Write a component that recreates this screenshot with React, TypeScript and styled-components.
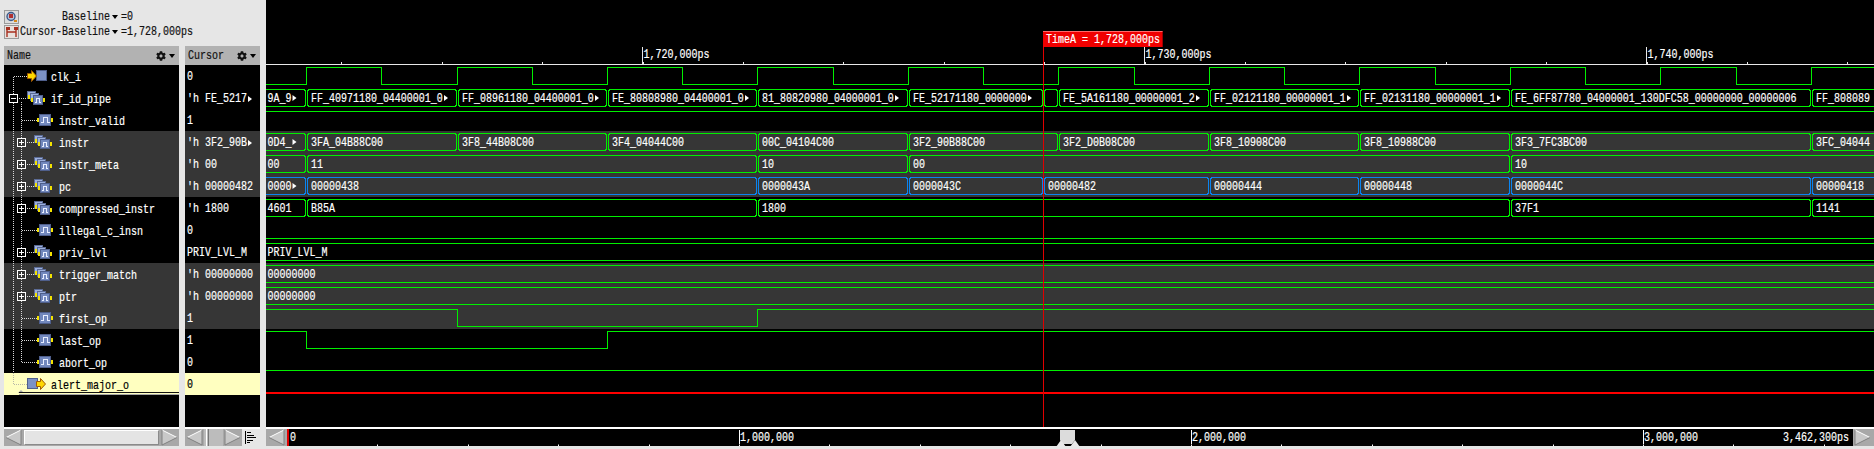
import * as React from 'react';
import styled, { createGlobalStyle } from 'styled-components';
import { FaCog } from 'react-icons/fa';

const GREEN = '#00f000';
const BLUE = '#0a84f0';
const RED = '#ff0000';
const WAVE_LEFT = 266;
const WAVE_WIDTH = 1608;
const CHAR = 6;

const GlobalStyle = createGlobalStyle`
    html, body {
        margin: 0;
        padding: 0;
        background: #e6e6e6;
        overflow: hidden;
    }
`;

const Page = styled.div`
    display: flex;
    width: 1874px;
    height: 449px;
    overflow: hidden;
    font-family: 'Liberation Mono', monospace;
    font-size: 13px;
    color: #fff;
`;

/* the reference font is a tall narrow bitmap: 13px glyphs squeezed to a 6px advance */
const Mono = styled.span<{ $chars: number; $drop?: number }>`
    display: inline-block;
    flex: none;
    width: ${p => p.$chars * CHAR}px;
    margin-top: ${p => p.$drop || 0}px;
    white-space: pre;
    text-align: left;
    transform: scaleX(0.769);
    transform-origin: left center;
    -webkit-text-stroke: 0.2px currentColor;
`;

const Txt = ({ children, drop }: { children: string; drop?: number }) => (
    <Mono $chars={children.length} $drop={drop}>
        {children}
    </Mono>
);

const SidePane = styled.div`
    display: flex;
    flex-direction: column;
    width: ${WAVE_LEFT}px;
    flex: none;
    background: #e6e6e6;
`;

const Readout = styled.div`
    height: 46px;
    padding: 9px 0 0 4px;
    box-sizing: border-box;
    color: #111;
`;

const ReadoutRow = styled.div`
    display: grid;
    grid-template-columns: 16px 90px 11px auto;
    align-items: center;
    height: 15px;
`;

const ReadoutName = styled.span`
    text-align: right;
`;

const Caret = styled.span`
    display: inline-block;
    width: 0;
    height: 0;
    border-left: 3px solid transparent;
    border-right: 3px solid transparent;
    border-top: 4px solid #000;
    margin-left: 2px;
`;

const Columns = styled.div`
    display: flex;
    gap: 6px;
    flex: 1;
    padding: 0 6px 0 4px;
`;

const Column = styled.div<{ $width: number }>`
    display: flex;
    flex-direction: column;
    width: ${p => p.$width}px;
`;

const ColumnHeader = styled.div`
    display: flex;
    align-items: center;
    justify-content: space-between;
    height: 19px;
    padding: 0 4px 0 3px;
    box-sizing: border-box;
    background: #b2b2b2;
    color: #111;
`;

const HeaderTools = styled.span`
    display: flex;
    align-items: center;
    gap: 1px;
`;

const Row = styled.div<{ $tone: Tone }>`
    position: relative;
    display: flex;
    align-items: center;
    height: 22px;
    flex: none;
    white-space: nowrap;
    background: ${p => (p.$tone === 'grey' ? '#363636' : p.$tone === 'note' ? '#ffffc0' : '#000')};
    color: ${p => (p.$tone === 'note' ? '#000' : '#fff')};
`;

const DropLine = styled.div`
    position: absolute;
    left: 15px;
    right: 0;
    bottom: 0;
    height: 1px;
    border-top: 1px solid #111;
    border-bottom: 1px solid #a8a8a8;
`;

const Value = styled.span`
    display: flex;
    align-items: center;
    padding: 1px 0 0 2px;
`;

const MoreMark = styled.span`
    display: inline-block;
    width: 0;
    height: 0;
    border-top: 3px solid transparent;
    border-bottom: 3px solid transparent;
    border-left: 4px solid #fff;
    margin-left: 1px;
`;

const Filler = styled.div`
    flex: 1;
    background: #000;
`;

const ScrollBar = styled.div`
    display: flex;
    align-items: stretch;
    height: 22px;
    flex: none;
    box-sizing: border-box;
    border-top: 2px solid #8f8f8f;
    border-bottom: 3px solid;
    border-image: linear-gradient(#fff 33%, #9a9a9a 33%, #9a9a9a 66%, #e6e6e6 66%) 3;
    border-top-style: solid;
    background: #a8a8a8;
`;

const Thumb = styled.div`
    flex: 1;
    margin: 1px 1px;
    background: #e4e4e4;
    border: 1px solid;
    border-color: #fff #8a8a8a #8a8a8a #fff;
`;

const NarrowTrack = styled.div`
    flex: 1;
    background: #bcbcbc;
    padding-left: 2px;
`;

const NarrowThumb = styled.div`
    width: 3px;
    height: 100%;
    box-sizing: border-box;
    border-left: 1px solid #fff;
    border-right: 1px solid #777;
`;

const ListButton = styled.button`
    display: flex;
    align-items: center;
    justify-content: center;
    width: 18px;
    padding: 0;
    border: 0;
    background: #e6e6e6;
`;

const WavePane = styled.div`
    position: relative;
    display: flex;
    flex-direction: column;
    width: ${WAVE_WIDTH}px;
    flex: none;
    background: #000;
`;

const Block = styled.svg`
    display: block;
    flex: none;
`;

const SvgText = styled.text`
    font-family: 'Liberation Mono', monospace;
    font-size: 13px;
    fill: #fff;
    stroke: #fff;
    stroke-width: 0.2px;
`;

const Ruler = styled.div`
    height: 65px;
    flex: none;
`;

const CursorLine = styled.div`
    position: absolute;
    left: 777px;
    top: 47px;
    bottom: 22px;
    width: 1px;
    background: #e00000;
`;

const TimeFlag = styled.div`
    position: absolute;
    left: 777px;
    top: 31px;
    width: 120px;
    height: 16px;
    box-sizing: border-box;
    padding-left: 3px;
    line-height: 15px;
    background: #f00000;
    border-top: 1px solid #ff6a6a;
    border-right: 1px solid #a00000;
    color: #fff;
`;

const Overview = styled(ScrollBar)`
    padding: 0 2px 0 1px;
`;

const OverviewTrack = styled.div`
    flex: 1;
    background: #000;
    margin-left: 1px;
`;

type Tone = 'black' | 'grey' | 'note';
type Segment = [number, string, boolean?];

const WaveText = ({ x, y, children }: { x: number; y: number; children: string }) => (
    <SvgText transform={`translate(${x} ${y}) scale(0.769 1)`}>{children}</SvgText>
);

const clockEdges = [
    306, 381, 457, 532, 607, 682, 757, 833, 908, 983, 1058, 1134, 1209, 1284, 1359, 1435, 1510, 1585, 1660, 1736, 1811,
];

const BusWave = ({ segments, color }: { segments: Segment[]; color: string }) => (
    <Block width={WAVE_WIDTH} height={22}>
        {segments.map(([start, label, more], i) => {
            const end = i + 1 < segments.length ? segments[i + 1][0] : 1890;
            const a = start - WAVE_LEFT;
            const b = end - WAVE_LEFT;
            const textX = Math.max(a + 5, 1.5);
            const points = `${a + 2.5},2.5 ${b - 1.5},2.5 ${b - 0.5},4.5 ${b - 0.5},17.5 ${b - 1.5},19.5 ${a + 2.5},19.5 ${a + 1.5},17.5 ${a + 1.5},4.5`;
            const tipX = textX + label.length * CHAR + 1;
            return (
                <g key={start}>
                    <polygon points={points} fill="none" stroke={color} shapeRendering="crispEdges" />
                    {label && (
                        <WaveText x={textX} y={15}>
                            {label}
                        </WaveText>
                    )}
                    {more && <polygon points={`${tipX},8 ${tipX + 4},11 ${tipX},14`} fill="#fff" />}
                </g>
            );
        })}
    </Block>
);

const BitWave = ({ high, edges = [], color = GREEN, weight = 1 }: { high: boolean; edges?: number[]; color?: string; weight?: number }) => {
    let level = high;
    let d = `M0 ${level ? 2.5 : 19.5}`;
    edges.forEach(edge => {
        const x = edge - WAVE_LEFT + 0.5;
        level = !level;
        d += ` L${x} ${level ? 19.5 : 2.5} L${x} ${level ? 2.5 : 19.5}`;
    });
    d += ` L${WAVE_WIDTH} ${level ? 2.5 : 19.5}`;
    return (
        <Block width={WAVE_WIDTH} height={22}>
            <path d={d} fill="none" stroke={color} strokeWidth={weight} shapeRendering="crispEdges" />
        </Block>
    );
};

const Nubs = ({ x, y, w }: { x: number; y: number; w: number }) => (
    <g fill="#f4e400">
        <rect x={x - 2} y={y} width={2} height={4} />
        <rect x={x + w} y={y} width={2} height={4} />
    </g>
);

const Pulse = ({ x, y }: { x: number; y: number }) => (
    <path d={`M${x} ${y + 6}h2.5v-5h4v5h2.5`} fill="none" stroke="#e8eeff" shapeRendering="crispEdges" />
);

const WireIcon = ({ x }: { x: number }) => (
    <g>
        <Nubs x={x} y={9} w={12} />
        <rect x={x + 0.5} y={5.5} width={11} height={11} fill="#7288bd" stroke="#4f5f8c" />
        <Pulse x={x + 2} y={7} />
    </g>
);

const GroupIcon = ({ x }: { x: number }) => (
    <g shapeRendering="crispEdges">
        <rect x={x + 0.5} y={4.5} width={8} height={7} fill="#9db0dc" stroke="#5b6b96" />
        <rect x={x + 3.5} y={6.5} width={8} height={7} fill="#9db0dc" stroke="#5b6b96" />
        <rect x={x + 1} y={8} width={2} height={4} fill="#f4e400" />
        <rect x={x + 6.5} y={8.5} width={9} height={9} fill="#7288bd" stroke="#4f5f8c" />
        <rect x={x + 4} y={11} width={2} height={4} fill="#f4e400" />
        <rect x={x + 16} y={11} width={2} height={4} fill="#f4e400" />
        <path d={`M${x + 8} 15.5h1.5v-4h3v4h1.5`} fill="none" stroke="#e8eeff" />
    </g>
);

const ArrowShape = ({ x }: { x: number }) => (
    <path d={`M${x + 0.5} 8.5h4v-3l5 5.5l-5 5.5v-3h-4z`} fill="#ffd800" stroke="#a05a00" />
);

const PortBox = ({ x }: { x: number }) => (
    <rect x={x + 0.5} y={5.5} width={10} height={10} fill="#7c92c6" stroke="#4f5f8c" />
);

const ExpandBox = ({ x, open, tone }: { x: number; open?: boolean; tone: Tone }) => (
    <g shapeRendering="crispEdges">
        <rect x={x + 0.5} y={7.5} width={8} height={8} fill={tone === 'grey' ? '#363636' : '#000'} stroke="#fff" />
        <path d={`M${x + 2} 11.5h5`} stroke="#fff" />
        {!open && <path d={`M${x + 4.5} 9v5`} stroke="#fff" />}
    </g>
);

const Dots = ({ d, color = '#d8d8d8' }: { d: string; color?: string }) => (
    <path d={d} fill="none" stroke={color} strokeDasharray="1 1" shapeRendering="crispEdges" />
);

type Kind = 'in' | 'top' | 'wire' | 'group' | 'lastWire' | 'out';

const Gutter = ({ kind, tone }: { kind: Kind; tone: Tone }) => {
    const deep = kind === 'top' || kind === 'in' || kind === 'out';
    return (
        <Block width={deep ? 47 : 55} height={22} viewBox={`4 0 ${deep ? 47 : 55} 22`}>
            {kind === 'in' && <Dots d="M13.5 11.5V22M13.5 11.5H27" />}
            {kind === 'out' && <Dots d="M13.5 0V11.5H27" color="#b8b8a8" />}
            {kind !== 'in' && kind !== 'out' && <Dots d="M13.5 0V22" />}
            {kind === 'top' && <Dots d="M17 11.5H28M21.5 15V22" />}
            {kind === 'wire' && <Dots d="M21.5 0V22M21.5 11.5H37" />}
            {kind === 'lastWire' && <Dots d="M21.5 0V11.5H37" />}
            {kind === 'group' && <Dots d="M21.5 0V22M25 11.5H34" />}
            {kind === 'in' && (
                <g>
                    <PortBox x={36} />
                    <ArrowShape x={27} />
                </g>
            )}
            {kind === 'out' && (
                <g>
                    <PortBox x={27} />
                    <ArrowShape x={36} />
                    <path d="M18 20l3-3 3 3z" fill="#a8a8a8" />
                </g>
            )}
            {kind === 'top' && (
                <g>
                    <ExpandBox x={9} open tone={tone} />
                    <GroupIcon x={27} />
                </g>
            )}
            {kind === 'group' && (
                <g>
                    <ExpandBox x={17} tone={tone} />
                    <GroupIcon x={34} />
                </g>
            )}
            {(kind === 'wire' || kind === 'lastWire') && <WireIcon x={39} />}
        </Block>
    );
};

type Signal = {
    name: string;
    kind: Kind;
    tone: Tone;
    cursor: string;
    more?: boolean;
    wave: React.ReactNode;
};

const signals: Signal[] = [
    { name: 'clk_i', kind: 'in', tone: 'black', cursor: '0', wave: <BitWave high={false} edges={clockEdges} /> },
    {
        name: 'if_id_pipe',
        kind: 'top',
        tone: 'black',
        cursor: "'h FE_5217",
        more: true,
        wave: (
            <BusWave
                color={GREEN}
                segments={[
                    [250, '9A_9', true],
                    [306, 'FF_40971180_04400001_0', true],
                    [457, 'FF_08961180_04400001_0', true],
                    [607, 'FE_80808980_04400001_0', true],
                    [757, '81_80820980_04000001_0', true],
                    [908, 'FE_52171180_0000000', true],
                    [1043, ''],
                    [1058, 'FE_5A161180_00000001_2', true],
                    [1209, 'FF_02121180_00000001_1', true],
                    [1359, 'FF_02131180_00000001_1', true],
                    [1510, 'FE_6FF87780_04000001_130DFC58_00000000_00000006'],
                    [1811, 'FF_808089'],
                ]}
            />
        ),
    },
    { name: 'instr_valid', kind: 'wire', tone: 'black', cursor: '1', wave: <BitWave high /> },
    {
        name: 'instr',
        kind: 'group',
        tone: 'grey',
        cursor: "'h 3F2_90B",
        more: true,
        wave: (
            <BusWave
                color={GREEN}
                segments={[
                    [250, '0D4_', true],
                    [306, '3FA_04B88C00'],
                    [457, '3F8_44B08C00'],
                    [607, '3F4_04044C00'],
                    [757, '00C_04104C00'],
                    [908, '3F2_90B88C00'],
                    [1058, '3F2_D0B08C00'],
                    [1209, '3F8_10908C00'],
                    [1359, '3F8_10988C00'],
                    [1510, '3F3_7FC3BC00'],
                    [1811, '3FC_04044'],
                ]}
            />
        ),
    },
    {
        name: 'instr_meta',
        kind: 'group',
        tone: 'grey',
        cursor: "'h 00",
        wave: (
            <BusWave
                color={GREEN}
                segments={[
                    [250, '00'],
                    [306, '11'],
                    [757, '10'],
                    [908, '00'],
                    [1510, '10'],
                ]}
            />
        ),
    },
    {
        name: 'pc',
        kind: 'group',
        tone: 'grey',
        cursor: "'h 00000482",
        wave: (
            <BusWave
                color={BLUE}
                segments={[
                    [250, '0000', true],
                    [306, '00000438'],
                    [757, '0000043A'],
                    [908, '0000043C'],
                    [1043, '00000482'],
                    [1209, '00000444'],
                    [1359, '00000448'],
                    [1510, '0000044C'],
                    [1811, '00000418'],
                ]}
            />
        ),
    },
    {
        name: 'compressed_instr',
        kind: 'group',
        tone: 'black',
        cursor: "'h 1800",
        wave: (
            <BusWave
                color={GREEN}
                segments={[
                    [250, '4601'],
                    [306, 'B85A'],
                    [757, '1800'],
                    [1510, '37F1'],
                    [1811, '1141'],
                ]}
            />
        ),
    },
    { name: 'illegal_c_insn', kind: 'wire', tone: 'black', cursor: '0', wave: <BitWave high={false} /> },
    {
        name: 'priv_lvl',
        kind: 'group',
        tone: 'black',
        cursor: 'PRIV_LVL_M',
        wave: <BusWave color={GREEN} segments={[[250, 'PRIV_LVL_M']]} />,
    },
    {
        name: 'trigger_match',
        kind: 'group',
        tone: 'grey',
        cursor: "'h 00000000",
        wave: <BusWave color={GREEN} segments={[[250, '00000000']]} />,
    },
    {
        name: 'ptr',
        kind: 'group',
        tone: 'grey',
        cursor: "'h 00000000",
        wave: <BusWave color={GREEN} segments={[[250, '00000000']]} />,
    },
    { name: 'first_op', kind: 'wire', tone: 'grey', cursor: '1', wave: <BitWave high edges={[457, 757]} /> },
    { name: 'last_op', kind: 'wire', tone: 'black', cursor: '1', wave: <BitWave high edges={[306, 607]} /> },
    { name: 'abort_op', kind: 'lastWire', tone: 'black', cursor: '0', wave: <BitWave high={false} /> },
    {
        name: 'alert_major_o',
        kind: 'out',
        tone: 'note',
        cursor: '0',
        wave: <BitWave high={false} color={RED} weight={2} />,
    },
];

const BevelArrow = ({ flip }: { flip?: boolean }) => (
    <Block width={19} height={17} viewBox="0 0 19 17">
        <g transform={flip ? 'translate(19 0) scale(-1 1)' : undefined}>
            <path d="M2 8.5L17 1V16Z" fill="#c8c8c8" />
            <path d="M2 8.5L17 1" stroke="#fff" fill="none" />
            <path d="M17 1V16L2 8.5" stroke="#808080" fill="none" />
        </g>
    </Block>
);

const ListIcon = () => (
    <Block width={12} height={13} viewBox="0 0 12 13">
        <path
            d="M0.5 0V13M2 1.5H6M2 4H9M2 6.5H11M2 9H8M2 11.5H5"
            stroke="#000"
            fill="none"
            shapeRendering="crispEdges"
        />
    </Block>
);

const Gear = () => (
    <HeaderTools>
        <FaCog size={10} color="#111" />
        <Caret />
    </HeaderTools>
);

const ZoomIcon = () => (
    <Block width={15} height={14} viewBox="0 0 15 14">
        <rect x="0.5" y="0.5" width="14" height="13" fill="#dcdcdc" stroke="#9a9a9a" />
        <circle cx="7" cy="6.5" r="4" fill="#b8c4d8" stroke="#3c5a8a" strokeWidth="1.4" />
        <rect x="5" y="4" width="4" height="4" fill="#b03030" />
        <rect x="10" y="10" width="3" height="2" fill="#d8881a" />
    </Block>
);

const DeltaIcon = () => (
    <Block width={15} height={14} viewBox="0 0 15 14">
        <rect x="0.5" y="0.5" width="14" height="13" fill="#e8e0dc" stroke="#9a9a9a" />
        <path d="M3 2V12M12 2V12M3 7H12" stroke="#a83020" strokeWidth="1.4" fill="none" />
        <rect x="2" y="2" width="4" height="3" fill="#a83020" />
        <rect x="10" y="2" width="4" height="3" fill="#a83020" />
    </Block>
);

const minorTicks = Array.from({ length: 16 }, (_, i) => 341.4 + i * 100.4);
const majorTicks: [number, string][] = [
    [642, '1,720,000ps'],
    [1144, '1,730,000ps'],
    [1646, '1,740,000ps'],
];
const overviewMarks: [number, string][] = [
    [452, '1,000,000'],
    [904, '2,000,000'],
    [1356, '3,000,000'],
];

const OverviewScale = () => (
    <Block width={1565} height={17} viewBox="0 0 1565 17" style={{ overflow: 'visible' }}>
        <rect x="0" y="0" width="2" height="17" fill="#e00000" />
        <WaveText x={3} y={12}>
            0
        </WaveText>
        {Array.from({ length: 17 }, (_, i) => (
            <rect key={i} x={Math.round(90.4 * (i + 1))} y={15.5} width={1} height={1.5} fill="#fff" />
        ))}
        {overviewMarks.map(([x, label]) => (
            <g key={x}>
                <rect x={x} y={1} width={1} height={14} fill="#fff" />
                <WaveText x={x + 1} y={12}>
                    {label}
                </WaveText>
            </g>
        ))}
        <WaveText x={1496} y={12}>
            3,462,300ps
        </WaveText>
        <path d="M773 1H788V11L785 15H776L773 11Z" fill="#dcdcdc" />
        <path d="M769 18L774 11L779 18Z" fill="#e8e8e8" />
        <path d="M783 18L788 11L793 18Z" fill="#e8e8e8" />
    </Block>
);

const App: React.FC = () => (
    <Page>
        <GlobalStyle />
        <SidePane>
            <Readout>
                <ReadoutRow>
                    <ZoomIcon />
                    <ReadoutName>
                        <Txt>Baseline</Txt>
                    </ReadoutName>
                    <Caret />
                    <Txt>=0</Txt>
                </ReadoutRow>
                <ReadoutRow>
                    <DeltaIcon />
                    <ReadoutName>
                        <Txt>Cursor-Baseline</Txt>
                    </ReadoutName>
                    <Caret />
                    <Txt>=1,728,000ps</Txt>
                </ReadoutRow>
            </Readout>
            <Columns>
                <Column $width={175}>
                    <ColumnHeader>
                        <Txt>Name</Txt>
                        <Gear />
                    </ColumnHeader>
                    {signals.map(signal => (
                        <Row key={signal.name} $tone={signal.tone}>
                            <Gutter kind={signal.kind} tone={signal.tone} />
                            <Txt drop={3}>{signal.name}</Txt>
                            {signal.tone === 'note' && <DropLine />}
                        </Row>
                    ))}
                    <Filler />
                    <ScrollBar>
                        <BevelArrow />
                        <Thumb />
                        <BevelArrow flip />
                    </ScrollBar>
                </Column>
                <Column $width={75}>
                    <ColumnHeader>
                        <Txt>Cursor</Txt>
                        <Gear />
                    </ColumnHeader>
                    {signals.map(signal => (
                        <Row key={signal.name} $tone={signal.tone}>
                            <Value>
                                <Txt>{signal.cursor}</Txt>
                                {signal.more && <MoreMark />}
                            </Value>
                        </Row>
                    ))}
                    <Filler />
                    <ScrollBar>
                        <BevelArrow />
                        <NarrowTrack>
                            <NarrowThumb />
                        </NarrowTrack>
                        <BevelArrow flip />
                        <ListButton>
                            <ListIcon />
                        </ListButton>
                    </ScrollBar>
                </Column>
            </Columns>
        </SidePane>
        <WavePane>
            <Ruler>
                <Block width={WAVE_WIDTH} height={65}>
                    <rect x={0} y={64} width={WAVE_WIDTH} height={1} fill="#e8e8e8" />
                    {minorTicks.map(x => (
                        <rect key={x} x={Math.round(x - WAVE_LEFT)} y={62} width={1} height={2} fill="#e8e8e8" />
                    ))}
                    {majorTicks.map(([x, label]) => (
                        <g key={x}>
                            <rect x={x - WAVE_LEFT} y={47} width={1} height={17} fill="#e8e8e8" />
                            <WaveText x={x - WAVE_LEFT + 1.5} y={58}>
                                {label}
                            </WaveText>
                        </g>
                    ))}
                </Block>
            </Ruler>
            {signals.map(signal => (
                <Row key={signal.name} $tone={signal.tone === 'note' ? 'black' : signal.tone}>
                    {signal.wave}
                </Row>
            ))}
            <Filler />
            <Overview>
                <BevelArrow />
                <OverviewTrack>
                    <OverviewScale />
                </OverviewTrack>
                <BevelArrow flip />
            </Overview>
            <CursorLine />
            <TimeFlag>
                <Txt>TimeA = 1,728,000ps</Txt>
            </TimeFlag>
        </WavePane>
    </Page>
);

export default App;
